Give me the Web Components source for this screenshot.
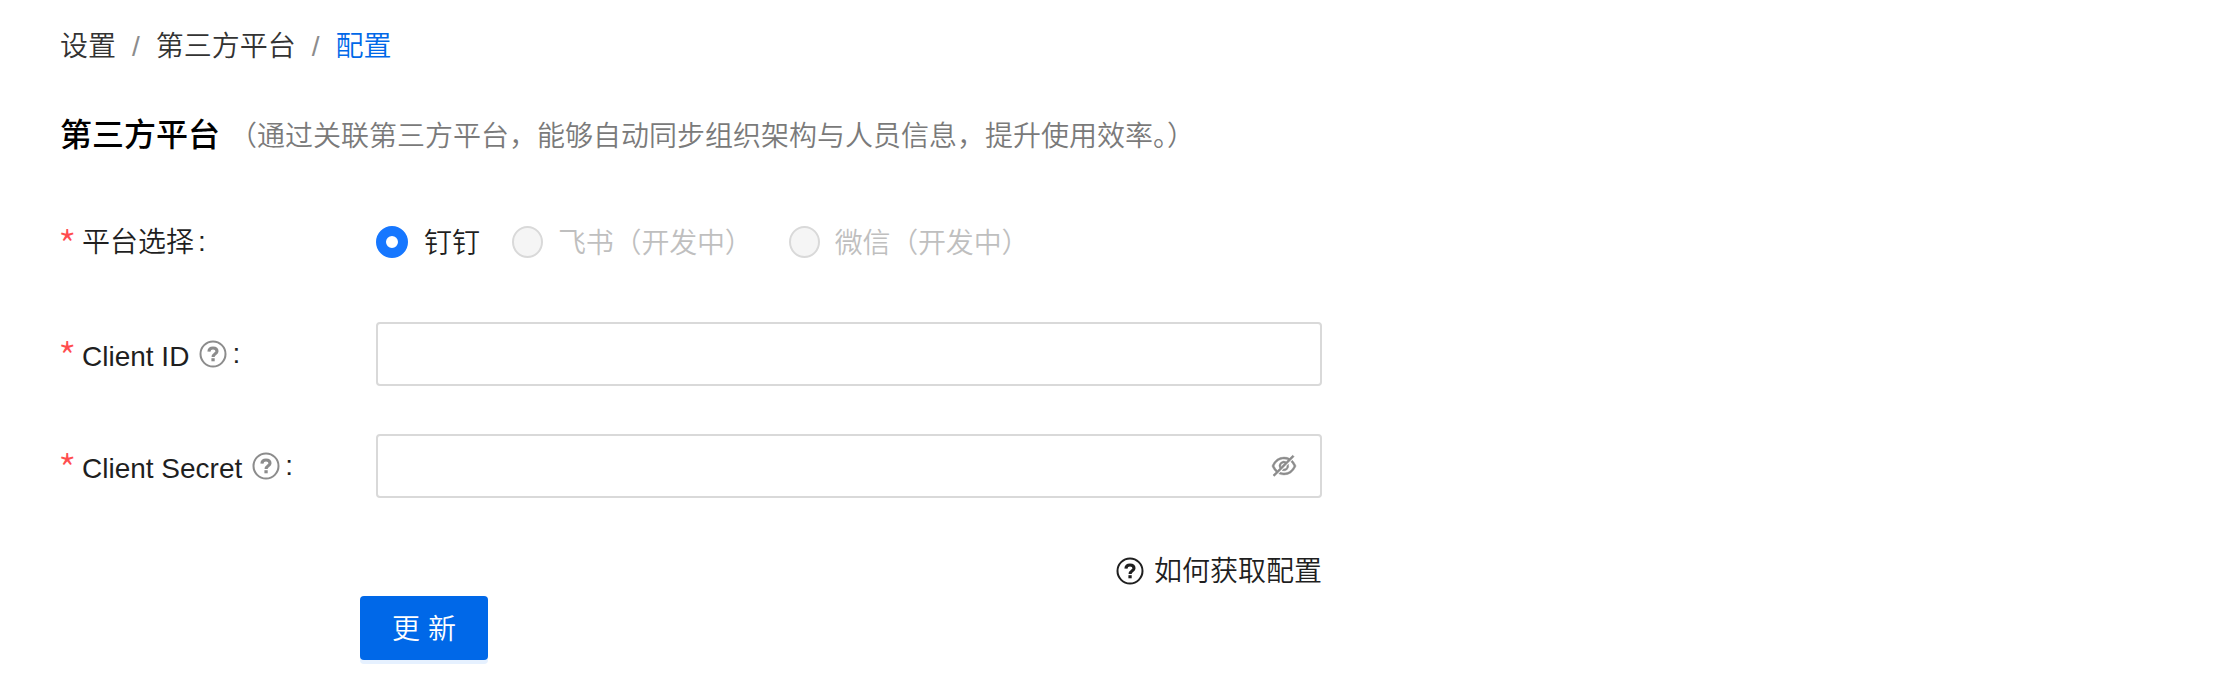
<!DOCTYPE html>
<html lang="zh-CN">
<head>
<meta charset="UTF-8">
<title>第三方平台</title>
<style>
  body {
    margin: 0;
    background: #fff;
    color: #1f1f1f;
    font: 350 28px/44px "Liberation Sans", "Noto Sans CJK SC", sans-serif;
  }
</style>
</head>
<body>
<settings-page></settings-page>

<script>
function attach(element, html) {
  const template = document.createElement('template');
  template.innerHTML = html;
  element.attachShadow({ mode: 'open' }).appendChild(template.content.cloneNode(true));
}

class HelpIcon extends HTMLElement {
  constructor() {
    super();
    attach(this, `
    <style>
      :host { display: inline-flex; width: 28px; height: 28px; flex: none; }
      svg { width: 28px; height: 28px; }
    </style>
    <svg viewBox="0 0 28 28" fill="none" stroke="currentColor">
      <circle cx="14" cy="14" r="12.5" stroke-width="2"/>
      <path d="M9.9 11.6C10.1 8.9 11.8 8 14 8C16.5 8 18 9.4 18 11.2C18 13.8 14.1 13.6 14.1 17" stroke-width="3.1"/>
      <path d="M12.4 18.2h3.3v3.1h-3.3z" fill="currentColor" stroke="none"/>
    </svg>
    `);
  }
}
customElements.define('help-icon', HelpIcon);

class EyeIcon extends HTMLElement {
  constructor() {
    super();
    attach(this, `
    <style>
      :host { display: inline-flex; width: 28px; height: 28px; color: #8c8c8c; }
      svg { width: 28px; height: 28px; overflow: visible; }
    </style>
    <svg viewBox="0 0 1024 1024" fill="currentColor" stroke="currentColor" stroke-width="16">
      <path d="M942.2 486.2Q889.47 375.11 816.7 305l-50.88 50.88C807.31 395.53 843.45 447.4 874.7 512 791.5 684.2 673.4 766 512 766q-72.67 0-133.87-22.38L323 798.75Q408 838 512 838q288.3 0 430.2-300.3a60.29 60.29 0 000-51.5zm-63.57-320.64L836 122.88a8 8 0 00-11.32 0L715.31 232.2Q624.86 186 512 186q-288.3 0-430.2 300.3a60.3 60.3 0 000 51.5q56.69 119.4 136.5 191.41L112.48 835a8 8 0 000 11.31L155.17 889a8 8 0 0011.31 0l712.15-712.12a8 8 0 000-11.32zM149.3 512C232.6 339.8 350.7 258 512 258c54.54 0 104.13 9.36 149.12 28.39l-70.3 70.3a176 176 0 00-238.13 238.13l-83.42 83.42C223.1 637.49 183.3 582.28 149.3 512zm246.7 0a112.11 112.11 0 01146.2-106.69L401.31 546.2A112 112 0 01396 512z"/>
      <path d="M508 624c-3.46 0-6.87-.16-10.25-.47l-52.82 52.82a176.09 176.09 0 00227.42-227.42l-52.82 52.82c.31 3.38.47 6.79.47 10.25a111.94 111.94 0 01-112 112z"/>
    </svg>
    `);
  }
}
customElements.define('eye-icon', EyeIcon);

class BreadCrumb extends HTMLElement {
  constructor() {
    super();
    attach(this, `
    <style>
      :host { display: flex; color: #333; }
      .separator { color: #8c8c8c; margin: 0 16px; }
      .current { color: #0068e8; }
    </style>
    <span>设置</span><span class="separator">/</span>
    <span>第三方平台</span><span class="separator">/</span>
    <span class="current">配置</span>
    `);
  }
}
customElements.define('bread-crumb', BreadCrumb);

class PageTitle extends HTMLElement {
  constructor() {
    super();
    attach(this, `
    <style>
      :host { display: flex; align-items: center; gap: 9px; color: #000; }
      h1 { margin: 0; font-size: 32px; font-weight: 500; }
      p { margin: 3px 0 0; color: #7a7a7a; }
    </style>
    <h1><slot></slot></h1>
    <p><slot name="hint"></slot></p>
    `);
  }
}
customElements.define('page-title', PageTitle);

class FormRow extends HTMLElement {
  constructor() {
    super();
    attach(this, `
    <style>
      :host { display: flex; height: 64px; align-items: center; }
      .label { display: flex; align-items: center; width: 316px; flex: none; }
      .required {
        width: 24px;
        margin-left: -2px;
        padding-top: 4px;
        color: #ff4d4f;
        font: 300 42px/44px "Noto Sans CJK SC", sans-serif;
      }
      .text { padding-top: 2px; }
      :host([help]) .text { padding-top: 5px; }
      .colon { margin-left: 4px; }
      help-icon { color: #8c8c8c; margin-left: 10px; }
      help-icon + .colon { margin-left: 5px; }
      .control { flex: 1; display: flex; }
    </style>
    <div class="label">
      <span class="required">*</span>
      <span class="text"><slot name="label"></slot></span>
      ${this.hasAttribute('help') ? '<help-icon></help-icon>' : ''}
      <span class="colon">:</span>
    </div>
    <div class="control"><slot></slot></div>
    `);
  }
}
customElements.define('form-row', FormRow);

class RadioOption extends HTMLElement {
  constructor() {
    super();
    attach(this, `
    <style>
      :host { display: flex; align-items: center; gap: 16px; margin-right: 32px; }
      .dot { box-sizing: border-box; width: 32px; height: 32px; border: 10px solid #1677ff; border-radius: 50%; }
      .text { padding-top: 3px; }
      :host([disabled]) { color: #bfbfbf; gap: 15px; margin-right: 36px; }
      :host([disabled]) .text { letter-spacing: -0.2px; }
      :host([disabled]) .dot { width: 31px; border: 2px solid #d9d9d9; background: #f5f5f5; }
    </style>
    <span class="dot"></span>
    <span class="text"><slot></slot></span>
    `);
  }
}
customElements.define('radio-option', RadioOption);

class TextField extends HTMLElement {
  constructor() {
    super();
    attach(this, `
    <style>
      :host {
        display: flex;
        box-sizing: border-box;
        width: 946px;
        height: 64px;
        padding: 0 22px;
        align-items: center;
        border: 2px solid #d9d9d9;
        border-radius: 4px;
      }
      input { flex: 1; min-width: 0; border: 0; outline: 0; padding: 0; font: inherit; background: none; }
    </style>
    <input type="${this.hasAttribute('secret') ? 'password' : 'text'}">
    <slot></slot>
    `);
  }
}
customElements.define('text-field', TextField);

class PrimaryButton extends HTMLElement {
  constructor() {
    super();
    attach(this, `
    <style>
      :host { display: block; }
      button {
        display: block;
        width: 128px;
        height: 64px;
        padding: 3px 0 0;
        border: 0;
        border-radius: 4px;
        background: #0068e8;
        box-shadow: 0 4px 0 #e6f1ff;
        color: #fff;
        font: inherit;
      }
    </style>
    <button><slot></slot></button>
    `);
  }
}
customElements.define('primary-button', PrimaryButton);

class SettingsPage extends HTMLElement {
  constructor() {
    super();
    attach(this, `
    <style>
      :host { display: block; box-sizing: border-box; width: 1322px; height: 700px; padding: 25px 0 0 60px; }
      page-title { height: 44px; margin-top: 44px; }
      form { display: grid; gap: 48px; margin-top: 53px; }
      .guide { display: flex; justify-content: flex-end; align-items: center; gap: 10px; height: 44px; margin-top: 51px; }
      .guide span { padding-top: 1px; }
      primary-button { margin: 3px 0 0 300px; }
    </style>
    <bread-crumb></bread-crumb>
    <page-title>第三方平台<span slot="hint">（通过关联第三方平台，能够自动同步组织架构与人员信息，提升使用效率。）</span></page-title>
    <form>
      <form-row>
        <span slot="label">平台选择</span>
        <radio-option>钉钉</radio-option>
        <radio-option disabled>飞书（开发中）</radio-option>
        <radio-option disabled>微信（开发中）</radio-option>
      </form-row>
      <form-row help>
        <span slot="label">Client ID</span>
        <text-field></text-field>
      </form-row>
      <form-row help>
        <span slot="label">Client Secret</span>
        <text-field secret><eye-icon></eye-icon></text-field>
      </form-row>
    </form>
    <div class="guide"><help-icon></help-icon><span>如何获取配置</span></div>
    <primary-button>更 新</primary-button>
    `);
  }
}
customElements.define('settings-page', SettingsPage);
</script>
</body>
</html>
